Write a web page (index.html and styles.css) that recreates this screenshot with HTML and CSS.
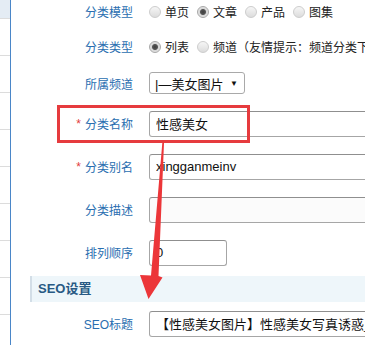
FILE: index.html
```html
<!DOCTYPE html>
<html lang="zh-CN">
<head>
    <meta charset="UTF-8">
    <meta name="viewport" content="width=device-width, initial-scale=1.0">
    <title>编辑分类</title>
    <link rel="stylesheet" href="styles.css">
</head>
<body>
    <div class="page">
        <aside class="side">
            <div class="side-item active"></div>
            <div class="side-item"></div>
            <div class="side-item"></div>
            <div class="side-item"></div>
            <div class="side-item"></div>
            <div class="side-item"></div>
            <div class="side-item"></div>
            <div class="side-item"></div>
            <div class="side-item"></div>
        </aside>

        <main class="main">
            <div class="form">
                <div class="row row-radio">
                    <span class="label">分类模型</span>
                    <div class="field">
                        <span class="radio"><i></i>单页</span>
                        <span class="radio"><i class="on"></i>文章</span>
                        <span class="radio"><i></i>产品</span>
                        <span class="radio"><i></i>图集</span>
                    </div>
                </div>
                <div class="row row-radio">
                    <span class="label">分类类型</span>
                    <div class="field">
                        <span class="radio"><i class="on"></i>列表</span>
                        <span class="radio wide"><i></i>频道（友情提示：频道分类下不能添加内容）</span>
                    </div>
                </div>
                <div class="row row-select">
                    <span class="label">所属频道</span>
                    <div class="field">
                        <span class="select"><span>|—美女图片</span><span class="caret">▼</span></span>
                    </div>
                </div>
                <div class="row">
                    <span class="label"><em class="req">*</em>分类名称</span>
                    <div class="field"><input class="input" type="text" value="性感美女"></div>
                </div>
                <div class="row">
                    <span class="label"><em class="req">*</em>分类别名</span>
                    <div class="field"><input class="input" type="text" value="xingganmeinv"></div>
                </div>
                <div class="row">
                    <span class="label">分类描述</span>
                    <div class="field"><input class="input soft" type="text" value=""></div>
                </div>
                <div class="row">
                    <span class="label">排列顺序</span>
                    <div class="field"><input class="input short" type="text" value="0"></div>
                </div>
            </div>

            <div class="section-title">SEO设置</div>

            <div class="row">
                <span class="label">SEO标题</span>
                <div class="field"><input class="input" type="text" value="【性感美女图片】性感美女写真诱惑_性感美女图片大全"></div>
            </div>
        </main>

        <!-- annotation drawn over the screenshot -->
        <div class="highlight"></div>
        <svg class="arrow" width="365" height="345" viewBox="0 0 365 345">
            <polygon points="163,141 164,143 158.5,276 162.5,277.5 148.5,299 140,275 151,275.5 162.3,143" fill="#ec3639"/>
        </svg>
    </div>
</body>
</html>
```

FILE: styles.css
```css
body {
    margin: 0;
    background: #fff;
    font-family: "Liberation Sans", "Noto Sans CJK SC", sans-serif;
    font-size: 12px;
    color: #222;
}
.page {
    position: relative;
    display: flex;
    height: 345px;
    overflow: hidden;
}
.side {
    flex: none;
    width: 10px;
    border-right: 1px solid #4a86c8;
}
.side-item {
    height: 36px;
    border-bottom: 1px solid #dcdcdc;
}
.side-item.active {
    height: 18px;
    background: #e4ecf4;
}
.main {
    flex: 1;
    min-width: 0;
    padding-left: 19px;
    overflow: hidden;
    white-space: nowrap;
}
.form {
    margin-top: -6px;
}
.row {
    display: grid;
    grid-template-columns: 103px 1fr;
    column-gap: 16px;
    align-items: center;
    height: 43px;
}
.row-radio {
    height: 35px;
}
.row-select {
    height: 38px;
}
.label {
    text-align: right;
    color: #2a6eb0;
}
.req {
    font-style: normal;
    color: #e23c3c;
    margin-right: 4px;
    position: relative;
    top: -1px;
}
.field {
    display: flex;
    align-items: center;
    min-width: 0;
}
.radio {
    display: inline-flex;
    align-items: center;
    margin-right: 8px;
    color: #222;
}
.radio i {
    width: 12px;
    height: 12px;
    margin-right: 4px;
    border-radius: 50%;
    border: 1px solid #cdcdcd;
    box-sizing: border-box;
    background: linear-gradient(#f6f6f6, #dcdcdc);
}
.radio i.on {
    border-color: #a8a8a8;
    background: radial-gradient(circle, #3d3d3d 0, #555 2.5px, #d6d6d6 3.5px, #ececec 6px);
}
.select {
    display: inline-flex;
    justify-content: space-between;
    align-items: center;
    width: 96px;
    height: 22px;
    padding: 0 6px 0 5px;
    box-sizing: border-box;
    border: 1px solid #a9a9a9;
    border-radius: 3px;
    background: #fff;
    font-size: 13px;
    color: #111;
}
.caret {
    font-size: 8px;
}
.input {
    flex: none;
    width: 260px;
    height: 26px;
    padding: 0 6px;
    box-sizing: border-box;
    border: 1px solid #a6a6a6;
    border-top-color: #8f8f8f;
    border-radius: 3px;
    background: #fff;
    font-family: "Liberation Sans", "Noto Sans CJK SC", sans-serif;
    font-size: 13px;
    color: #111;
    outline: none;
}
.input.soft {
    background: #fbfbfb;
}
.input.short {
    width: 78px;
}
.section-title {
    margin-top: 2px;
    height: 26px;
    line-height: 26px;
    padding-left: 6px;
    border-left: 2px solid #d3dee7;
    background: #eef6fa;
    font-size: 13px;
    font-weight: bold;
    color: #285a84;
}
.highlight {
    position: absolute;
    left: 57px;
    top: 105px;
    width: 193px;
    height: 38px;
    box-sizing: border-box;
    border: 3px solid #e63b3e;
    pointer-events: none;
}
.arrow {
    position: absolute;
    left: 0;
    top: 0;
    pointer-events: none;
}
```
